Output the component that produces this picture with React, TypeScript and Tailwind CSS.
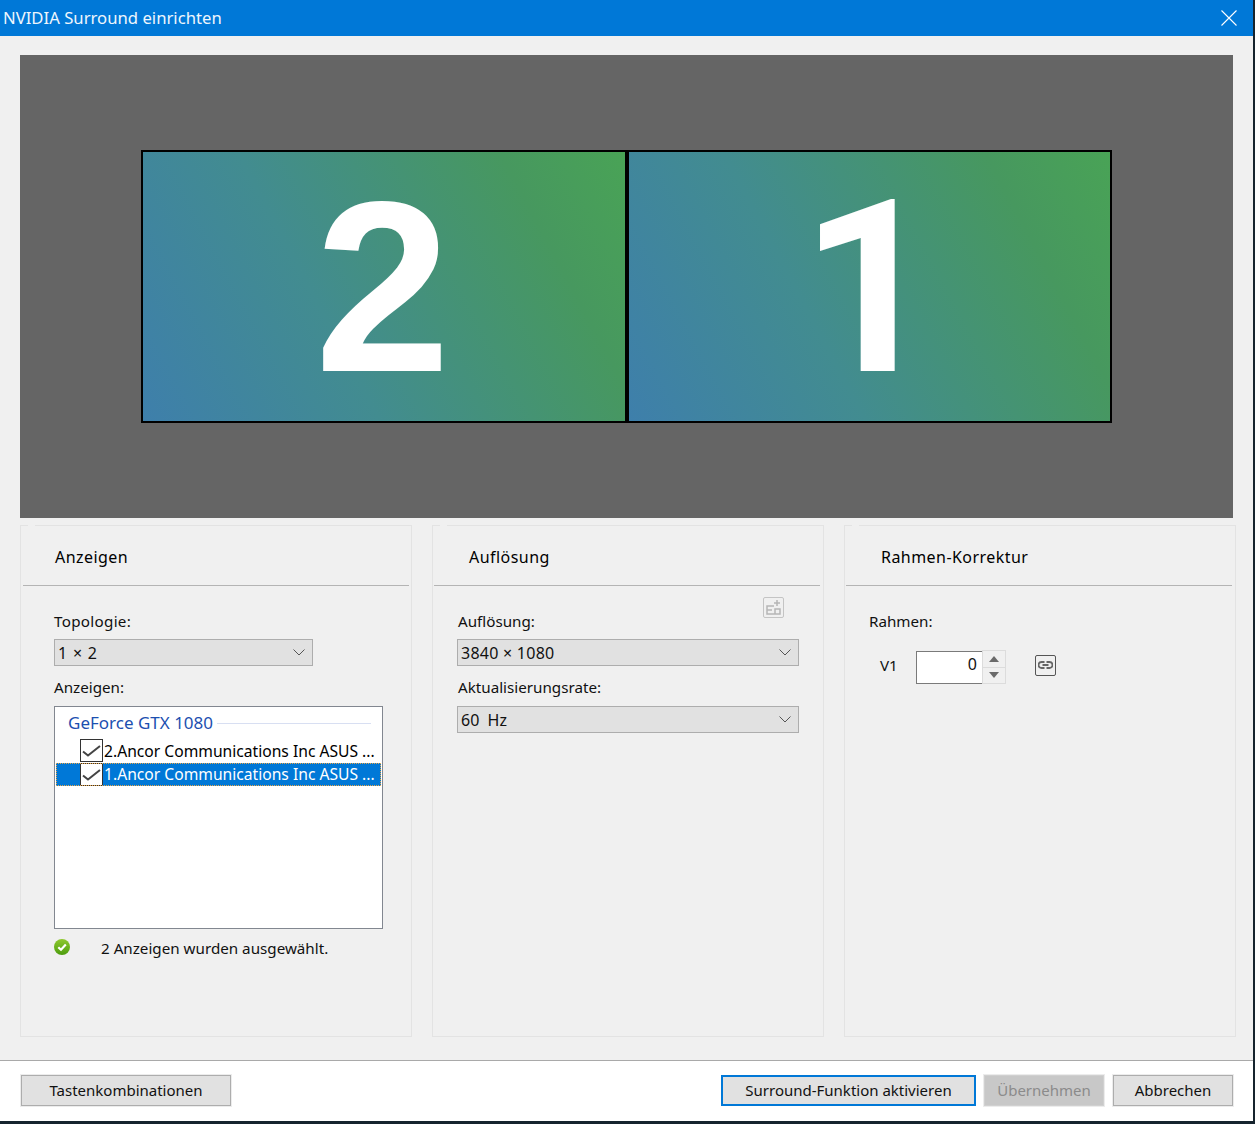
import type { ReactNode } from "react";

const font = { fontFamily: '"Noto Sans", sans-serif' };

function Monitor({ children, className }: { children: ReactNode; className: string }) {
  return (
    <div
      className={`flex items-center justify-center border-black bg-[linear-gradient(62deg,#3e7fab_0%,#428c90_38%,#47985f_80%,#49a356_100%)] ${className}`}
    >
      {children}
    </div>
  );
}

function Panel({
  title,
  titleClass,
  ruleClass,
  children,
}: {
  title: string;
  titleClass: string;
  ruleClass: string;
  children: ReactNode;
}) {
  return (
    <section className="relative flex h-[512px] w-[392px] flex-col border border-[#e3e3e3]">
      <span className="absolute -top-px left-[7px] h-px w-[7px] bg-[#f0f0f0]" />
      <h2 className={`flex h-[59px] shrink-0 items-center pt-[3px] text-[16px] font-normal tracking-[0.45px] text-black ${titleClass}`}>
        {title}
      </h2>
      <div className={`h-px shrink-0 bg-[#b4b4b4] ${ruleClass}`} />
      {children}
    </section>
  );
}

function Select({ value, className }: { value: string; className: string }) {
  return (
    <div className={`flex h-[27px] items-center justify-between border border-[#adadad] bg-[#e1e1e1] pl-[3px] pr-[7px] text-[16px] text-[#111] ${className}`}>
      <span className="whitespace-pre">{value}</span>
      <svg width="12" height="7" viewBox="0 0 12 7" fill="none" stroke="#555" strokeWidth="1">
        <path d="M.5.5 6 6 11.5.5" />
      </svg>
    </div>
  );
}

function Check() {
  return (
    <span className="flex h-[23px] w-[23px] shrink-0 items-center justify-center border border-[#333] bg-white">
      <svg width="21" height="21" viewBox="0 0 21 21" fill="none" stroke="#444" strokeWidth="2">
        <path d="M2 11.5 7 15.5 19 6" />
      </svg>
    </span>
  );
}

function Button({ children, className }: { children: ReactNode; className: string }) {
  return (
    <button className={`flex h-[31px] items-center justify-center text-[15px] ${className}`}>{children}</button>
  );
}

export default function App() {
  return (
    <div className="h-[1124px] w-[1255px] overflow-hidden bg-[#16242e]" style={font}>
      <div className="flex h-[1121px] w-[1253px] flex-col bg-[#f0f0f0]">
        <header className="flex h-[36px] shrink-0 items-center justify-between bg-[#0078d7] pl-[3px] pr-[16px] text-[16.7px] text-[#eef6fd]">
          <span>NVIDIA Surround einrichten</span>
          <svg width="16" height="16" viewBox="0 0 16 16" stroke="#fff" strokeWidth="1.1">
            <path d="M.5.5l15 15M15.5.5l-15 15" />
          </svg>
        </header>

        <main className="flex flex-1 flex-col pl-[20px] pt-[19px]">
          <div className="flex h-[463px] w-[1213px] items-center justify-center bg-[#656565] pb-[1px]">
            <div className="flex h-[273px] w-[971px]">
              <Monitor className="w-[486px] border-y-2 border-l-2 border-r-[2px] pr-[3px]">
                <span className="pt-[1px] font-['Liberation_Sans'] text-[244px] leading-none font-bold text-white">2</span>
              </Monitor>
              <Monitor className="w-[485px] border-y-2 border-r-2 border-l-[2px]">
                <span className="pt-[4px] font-['Roboto'] text-[241px] leading-none font-bold text-white">1</span>
              </Monitor>
            </div>
          </div>

          <div className="mt-[7px] flex gap-[20px]">
            <Panel title="Anzeigen" titleClass="pl-[34px]" ruleClass="mx-[2px]">
              <div className="flex flex-col pl-[33px] text-[15.2px] text-[#111]">
                <label className="mt-[24px] h-[22px] leading-[22px] tracking-[0.3px]">Topologie:</label>
                <Select value="1 × 2" className="mt-[7px] w-[259px] tracking-[0.8px]" />
                <label className="mt-[10px] h-[22px] leading-[22px]">Anzeigen:</label>
                <div className="mt-[8px] flex h-[223px] w-[329px] flex-col border border-[#828790] bg-white pl-px pr-px">
                  <div className="flex h-[32px] shrink-0 items-center pl-[12px]">
                    <span className="text-[#1c4fb0] text-[17px]">GeForce GTX 1080</span>
                    <span className="ml-[4px] mr-[10px] h-px flex-1 bg-[#d8dff2]" />
                  </div>
                  <div className="flex h-[24px] shrink-0 items-start pl-[24px] text-[15.65px] text-black">
                    <Check />
                    <span className="ml-px whitespace-nowrap leading-[24px]">2.Ancor Communications Inc ASUS ...</span>
                  </div>
                  <div className="flex h-[23px] shrink-0 items-center bg-[#0078d7] pl-[24px] text-[15.65px] text-white outline-1 -outline-offset-1 outline-dotted outline-[#e8a64a]">
                    <Check />
                    <span className="ml-px whitespace-nowrap pt-[1px]">1.Ancor Communications Inc ASUS ...</span>
                  </div>
                </div>
                <div className="mt-[10px] flex items-start">
                  <svg width="16" height="16" viewBox="0 0 16 16">
                    <defs>
                      <linearGradient id="okFill" x1="0" y1="0" x2="0" y2="1">
                        <stop offset="0" stopColor="#8fc92f" />
                        <stop offset="1" stopColor="#4c9c0e" />
                      </linearGradient>
                    </defs>
                    <circle cx="8" cy="8" r="8" fill="url(#okFill)" />
                    <path d="M4.3 8.2 7 10.8l4.8-5.2" fill="none" stroke="#fff" strokeWidth="2.2" />
                  </svg>
                  <span className="ml-[31px] leading-[19px]">2 Anzeigen wurden ausgewählt.</span>
                </div>
              </div>
            </Panel>

            <Panel title="Auflösung" titleClass="pl-[36px]" ruleClass="ml-px mr-[3px]">
              <div className="relative flex flex-col pl-[24px] text-[15.2px] text-[#111]">
                <span className="absolute right-[39px] top-[11px] flex h-[21px] w-[21px] items-center justify-center rounded-[2px] border border-[#c4c4c4]">
                  <svg width="17" height="17" viewBox="0 0 17 17" fill="none" stroke="#b5b5b5" strokeWidth="1.5">
                    <path d="M9 7H2v8h13v-5H10v5M2 11h5M12 1v6M9 4h6" />
                  </svg>
                </span>
                <label className="ml-px mt-[24px] h-[22px] leading-[22px]">Auflösung:</label>
                <Select value="3840 × 1080" className="mt-[7px] w-[342px] tracking-[0.25px]" />
                <label className="ml-px mt-[10px] h-[22px] leading-[22px]">Aktualisierungsrate:</label>
                <Select value="60  Hz" className="mt-[8px] w-[342px]" />
              </div>
            </Panel>

            <Panel title="Rahmen-Korrektur" titleClass="pl-[36px]" ruleClass="ml-px mr-[3px]">
              <div className="flex flex-col pl-[24px] text-[15.2px] text-[#111]">
                <label className="mt-[24px] h-[22px] leading-[22px]">Rahmen:</label>
                <div className="ml-[11px] mt-[18px] flex items-center">
                  <span className="w-[36px] pb-[3px]">V1</span>
                  <div className="flex h-[33px] w-[66px] items-center justify-end border border-r-0 border-[#7a7a7a] bg-white pb-[6px] pr-[5px] text-[16px]">
                    0
                  </div>
                  <div className="flex h-[34px] w-[24px] flex-col border border-[#dcdcdc]">
                    <span className="flex flex-1 items-center justify-center border-b border-[#dcdcdc]">
                      <svg width="10" height="6" viewBox="0 0 10 6"><path d="M5 0l5 6H0z" fill="#6a6a6a" /></svg>
                    </span>
                    <span className="flex flex-1 items-center justify-center">
                      <svg width="10" height="6" viewBox="0 0 10 6"><path d="M0 0h10L5 6z" fill="#6a6a6a" /></svg>
                    </span>
                  </div>
                  <span className="mb-[4px] ml-[29px] flex h-[21px] w-[21px] items-center justify-center rounded-[2px] border border-[#555]">
                    <svg width="15" height="8" viewBox="0 0 15 8" fill="none" stroke="#666" strokeWidth="1.8">
                      <path d="M6.5 1H3.5a3 3 0 0 0 0 6h3M8.5 1h3a3 3 0 0 1 0 6h-3M4.5 4h6" />
                    </svg>
                  </span>
                </div>
              </div>
            </Panel>
          </div>
        </main>

        <footer className="flex h-[61px] shrink-0 items-start border-t border-[#a9a9a9] bg-white pl-[21px] pr-[20px] pt-[14px] text-[#111]">
          <Button className="w-[210px] border border-[#adadad] bg-[#e1e1e1] outline-1 outline-[#ececec]">Tastenkombinationen</Button>
          <Button className="ml-auto w-[255px] border-2 border-[#0078d7] bg-[#e1e1e1]">Surround-Funktion aktivieren</Button>
          <Button className="ml-[8px] w-[120px] border border-[#d0d0d0] bg-[#c8c8c8] text-[#8b8b8b] outline-1 outline-[#ececec]">Übernehmen</Button>
          <Button className="ml-[9px] w-[120px] border border-[#adadad] bg-[#e1e1e1] outline-1 outline-[#ececec]">Abbrechen</Button>
        </footer>
      </div>
    </div>
  );
}
